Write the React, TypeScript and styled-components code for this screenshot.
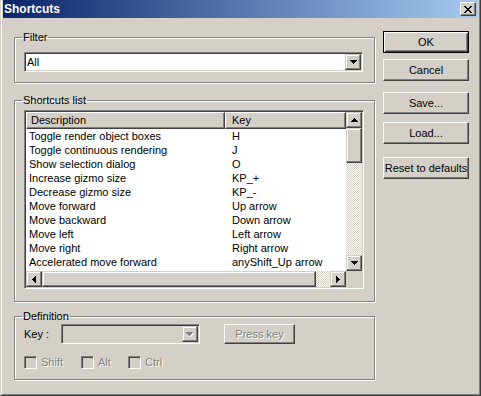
import React from "react";
import styled, { createGlobalStyle, css } from "styled-components";

const FACE = "#d4d0c8";
const SHADOW = "#808080";
const DARK = "#404040";
const LIGHT = "#ffffff";
const UI_FONT = `"Liberation Sans", Arial, sans-serif`;

const GlobalStyle = createGlobalStyle`
  html, body { margin: 0; padding: 0; background: ${FACE}; }
  body { font-family: ${UI_FONT}; font-size: 11px; color: #000; }
  *, *::before, *::after { box-sizing: border-box; }
`;

const pushBevel = css`
  border: 1px solid;
  border-color: ${LIGHT} ${DARK} ${DARK} ${LIGHT};
  box-shadow: inset -1px -1px 0 ${SHADOW}, inset 1px 1px 0 ${FACE};
  background: ${FACE};
`;

const scrollBevel = css`
  border: 1px solid;
  border-color: ${FACE} ${DARK} ${DARK} ${FACE};
  box-shadow: inset -1px -1px 0 ${SHADOW}, inset 1px 1px 0 ${LIGHT};
  background: ${FACE};
`;

const sunkenBevel = css`
  border: 1px solid;
  border-color: ${SHADOW} ${LIGHT} ${LIGHT} ${SHADOW};
  box-shadow: inset 1px 1px 0 ${DARK}, inset -1px -1px 0 ${FACE};
`;

const disabledText = css`
  color: ${SHADOW};
  text-shadow: 1px 1px 0 ${LIGHT};
`;

/* ---------- window ---------- */

const Window = styled.div`
  width: 481px;
  height: 396px;
  display: flex;
  flex-direction: column;
  background: ${FACE};
  border-style: solid;
  border-width: 0 1px 1px 1px;
  border-color: ${FACE} ${DARK} ${DARK} ${FACE};
`;

const Frame = styled.div`
  flex: 1;
  display: flex;
  flex-direction: column;
  border-style: solid;
  border-width: 0 1px 1px 1px;
  border-color: ${LIGHT} ${SHADOW} ${SHADOW} ${LIGHT};
  padding: 0 1px 1px 1px;
`;

const TitleBar = styled.div`
  height: 18px;
  margin-bottom: 1px;
  display: flex;
  align-items: center;
  justify-content: space-between;
  padding: 0 2px 0 1px;
  background: linear-gradient(to right, #0a246a, #a6caf0);
`;

const TitleText = styled.span`
  font-family: "Liberation Sans", Arial, sans-serif;
  font-weight: bold;
  font-size: 12px;
  color: #fff;
`;

const CloseButton = styled.div`
  ${pushBevel};
  width: 16px;
  height: 14px;
  display: flex;
  align-items: center;
  justify-content: center;
`;

const Body = styled.div`
  flex: 1;
  display: flex;
  gap: 8px;
  padding: 12px 0 0 11px;
`;

const LeftColumn = styled.div`
  width: 361px;
  display: flex;
  flex-direction: column;
`;

const RightColumn = styled.div`
  width: 86px;
  display: flex;
  flex-direction: column;
`;

/* ---------- group boxes ---------- */

const Group = styled.fieldset<{ $mt?: number }>`
  margin: ${(p) => p.$mt ?? 0}px 0 0 0;
  padding: 0;
  min-width: 0;
  border: 1px solid ${SHADOW};
  box-shadow: 1px 1px 0 ${LIGHT}, inset 1px 1px 0 ${LIGHT};
`;

const Legend = styled.legend`
  margin-left: 7px;
  padding: 0 1px;
  line-height: 13px;
  height: 13px;
`;

const GroupBody = styled.div<{ $pad: string }>`
  padding: ${(p) => p.$pad};
  display: flex;
  flex-direction: column;
`;

/* ---------- combo ---------- */

const Combo = styled.div<{ $w: number; $disabled?: boolean }>`
  ${sunkenBevel};
  width: ${(p) => p.$w}px;
  height: 20px;
  padding: 1px;
  display: flex;
  align-items: stretch;
  background: ${(p) => (p.$disabled ? FACE : "#fff")};
`;

const ComboText = styled.div`
  flex: 1;
  padding-left: 1px;
  line-height: 16px;
`;

const DropButton = styled.div`
  ${scrollBevel};
  width: 16px;
  height: 16px;
  display: flex;
  align-items: center;
  justify-content: center;
`;

/* ---------- list view ---------- */

const ListView = styled.div`
  ${sunkenBevel};
  height: 179px;
  padding: 1px;
  background: #fff;
  display: grid;
  grid-template-columns: 1fr 16px;
  grid-template-rows: 1fr 16px;
`;

const ListMain = styled.div`
  overflow: hidden;
  display: flex;
  flex-direction: column;
`;

const HeaderRow = styled.div`
  display: grid;
  grid-template-columns: 199px 1fr;
  height: 17px;
  flex: none;
`;

const HeaderCell = styled.div<{ $pad: number }>`
  ${pushBevel};
  padding-left: ${(p) => p.$pad}px;
  line-height: 15px;
  white-space: nowrap;
  overflow: hidden;
`;

const Row = styled.div`
  display: grid;
  grid-template-columns: 199px 1fr;
  height: 14px;
  line-height: 14px;
  flex: none;
`;

const Cell = styled.div<{ $pad: number }>`
  padding-left: ${(p) => p.$pad}px;
  white-space: nowrap;
  overflow: hidden;
`;

const VScroll = styled.div`
  display: flex;
  flex-direction: column;
`;

const HScroll = styled.div`
  display: flex;
`;

const ScrollButton = styled.div`
  ${scrollBevel};
  width: 16px;
  height: 16px;
  flex: none;
  display: flex;
  align-items: center;
  justify-content: center;
`;

const Thumb = styled.div<{ $vertical?: boolean; $size: number }>`
  ${scrollBevel};
  flex: none;
  width: ${(p) => (p.$vertical ? "16px" : `${p.$size}px`)};
  height: ${(p) => (p.$vertical ? `${p.$size}px` : "16px")};
`;

const Track = styled.div`
  flex: 1;
  background-color: #fff;
  background-image: conic-gradient(${FACE} 25%, transparent 0 50%, ${FACE} 0 75%, transparent 0);
  background-size: 2px 2px;
`;

const Corner = styled.div`
  background: ${FACE};
`;

/* ---------- buttons ---------- */

const PushButton = styled.button<{ $default?: boolean; $mt?: number; $w?: number; $h?: number }>`
  font: inherit;
  color: #000;
  padding: 0;
  margin: ${(p) => p.$mt ?? 0}px 0 0 0;
  width: ${(p) => p.$w ?? 86}px;
  height: ${(p) => p.$h ?? 22}px;
  white-space: nowrap;
  background: ${FACE};
  ${(p) =>
    p.$default
      ? css`
          border: 1px solid #000;
          box-shadow: inset 1px 1px 0 ${LIGHT}, inset -1px -1px 0 ${DARK},
            inset 2px 2px 0 ${FACE}, inset -2px -2px 0 ${SHADOW};
        `
      : pushBevel}
  &:disabled {
    ${disabledText};
  }
`;

/* ---------- definition ---------- */

const DefRow = styled.div<{ $mt?: number; $h: number }>`
  display: flex;
  align-items: center;
  height: ${(p) => p.$h}px;
  margin-top: ${(p) => p.$mt ?? 0}px;
`;

const FieldLabel = styled.span<{ $w: number }>`
  width: ${(p) => p.$w}px;
  flex: none;
`;

const CheckItem = styled.div<{ $w?: number }>`
  display: flex;
  align-items: center;
  gap: 4px;
  width: ${(p) => (p.$w ? `${p.$w}px` : "auto")};
  flex: none;
`;

const CheckBox = styled.span`
  ${sunkenBevel};
  width: 13px;
  height: 13px;
  background: ${FACE};
  flex: none;
`;

const DisabledLabel = styled.span`
  ${disabledText};
  line-height: 13px;
`;

/* ---------- drawings ---------- */

type Dir = "up" | "down" | "left" | "right";
const ARROW_ROWS = [7, 5, 3, 1];

function Arrow({ dir, disabled }: { dir: Dir; disabled?: boolean }) {
  const vertical = dir === "up" || dir === "down";
  const w = vertical ? 7 : 4;
  const h = vertical ? 4 : 7;
  const rects = ARROW_ROWS.map((len, i) => {
    const off = (7 - len) / 2;
    if (dir === "down") return { x: off, y: i, w: len, h: 1 };
    if (dir === "up") return { x: off, y: 3 - i, w: len, h: 1 };
    if (dir === "right") return { x: i, y: off, w: 1, h: len };
    return { x: 3 - i, y: off, w: 1, h: len };
  });
  const pad = disabled ? 1 : 0;
  return (
    <svg width={w + pad} height={h + pad} shapeRendering="crispEdges" style={{ display: "block" }}>
      {disabled &&
        rects.map((r, i) => (
          <rect key={`s${i}`} x={r.x + 1} y={r.y + 1} width={r.w} height={r.h} fill="#fff" />
        ))}
      {rects.map((r, i) => (
        <rect key={i} x={r.x} y={r.y} width={r.w} height={r.h} fill={disabled ? SHADOW : "#000"} />
      ))}
    </svg>
  );
}

function CloseGlyph() {
  const px: [number, number, number][] = [
    [0, 0, 2], [6, 0, 2],
    [1, 1, 2], [5, 1, 2],
    [2, 2, 4],
    [3, 3, 2],
    [2, 4, 4],
    [1, 5, 2], [5, 5, 2],
    [0, 6, 2], [6, 6, 2],
  ];
  return (
    <svg width={8} height={7} shapeRendering="crispEdges" style={{ display: "block" }}>
      {px.map(([x, y, w], i) => (
        <rect key={i} x={x} y={y} width={w} height={1} fill="#000" />
      ))}
    </svg>
  );
}

/* ---------- data ---------- */

const shortcuts: [string, string][] = [
  ["Toggle render object boxes", "H"],
  ["Toggle continuous rendering", "J"],
  ["Show selection dialog", "O"],
  ["Increase gizmo size", "KP_+"],
  ["Decrease gizmo size", "KP_-"],
  ["Move forward", "Up arrow"],
  ["Move backward", "Down arrow"],
  ["Move left", "Left arrow"],
  ["Move right", "Right arrow"],
  ["Accelerated move forward", "anyShift_Up arrow"],
];

export default function App() {
  return (
    <>
      <GlobalStyle />
      <Window>
        <Frame>
          <TitleBar>
            <TitleText>Shortcuts</TitleText>
            <CloseButton>
              <CloseGlyph />
            </CloseButton>
          </TitleBar>
          <Body>
            <LeftColumn>
              <Group>
                <Legend>Filter</Legend>
                <GroupBody $pad="8px 10px 10px 9px">
                  <Combo $w={339}>
                    <ComboText>All</ComboText>
                    <DropButton>
                      <Arrow dir="down" />
                    </DropButton>
                  </Combo>
                </GroupBody>
              </Group>

              <Group $mt={11}>
                <Legend>Shortcuts list</Legend>
                <GroupBody $pad="3px 10px 12px 9px">
                  <ListView>
                    <ListMain>
                      <HeaderRow>
                        <HeaderCell $pad={4}>Description</HeaderCell>
                        <HeaderCell $pad={6}>Key</HeaderCell>
                      </HeaderRow>
                      {shortcuts.map(([d, k]) => (
                        <Row key={d}>
                          <Cell $pad={3}>{d}</Cell>
                          <Cell $pad={7}>{k}</Cell>
                        </Row>
                      ))}
                    </ListMain>
                    <VScroll>
                      <ScrollButton>
                        <Arrow dir="up" />
                      </ScrollButton>
                      <Thumb $vertical $size={35} />
                      <Track />
                      <ScrollButton>
                        <Arrow dir="down" />
                      </ScrollButton>
                    </VScroll>
                    <HScroll>
                      <ScrollButton>
                        <Arrow dir="left" />
                      </ScrollButton>
                      <Thumb $size={274} />
                      <Track />
                      <ScrollButton>
                        <Arrow dir="right" />
                      </ScrollButton>
                    </HScroll>
                    <Corner />
                  </ListView>
                </GroupBody>
              </Group>

              <Group $mt={8}>
                <Legend>Definition</Legend>
                <GroupBody $pad="1px 10px 10px 9px">
                  <DefRow $h={20}>
                    <FieldLabel $w={37}>Key :</FieldLabel>
                    <Combo $w={139} $disabled>
                      <ComboText />
                      <DropButton>
                        <Arrow dir="down" disabled />
                      </DropButton>
                    </Combo>
                    <PushButton $w={71} $h={20} disabled style={{ marginLeft: 24 }}>
                      Press key
                    </PushButton>
                  </DefRow>
                  <DefRow $h={13} $mt={12}>
                    <CheckItem $w={57}>
                      <CheckBox />
                      <DisabledLabel>Shift</DisabledLabel>
                    </CheckItem>
                    <CheckItem $w={47}>
                      <CheckBox />
                      <DisabledLabel>Alt</DisabledLabel>
                    </CheckItem>
                    <CheckItem>
                      <CheckBox />
                      <DisabledLabel>Ctrl</DisabledLabel>
                    </CheckItem>
                  </DefRow>
                </GroupBody>
              </Group>
            </LeftColumn>

            <RightColumn>
              <PushButton $default>OK</PushButton>
              <PushButton $mt={6}>Cancel</PushButton>
              <PushButton $mt={11}>Save...</PushButton>
              <PushButton $mt={8}>Load...</PushButton>
              <PushButton $mt={13}>Reset to defaults</PushButton>
            </RightColumn>
          </Body>
        </Frame>
      </Window>
    </>
  );
}
